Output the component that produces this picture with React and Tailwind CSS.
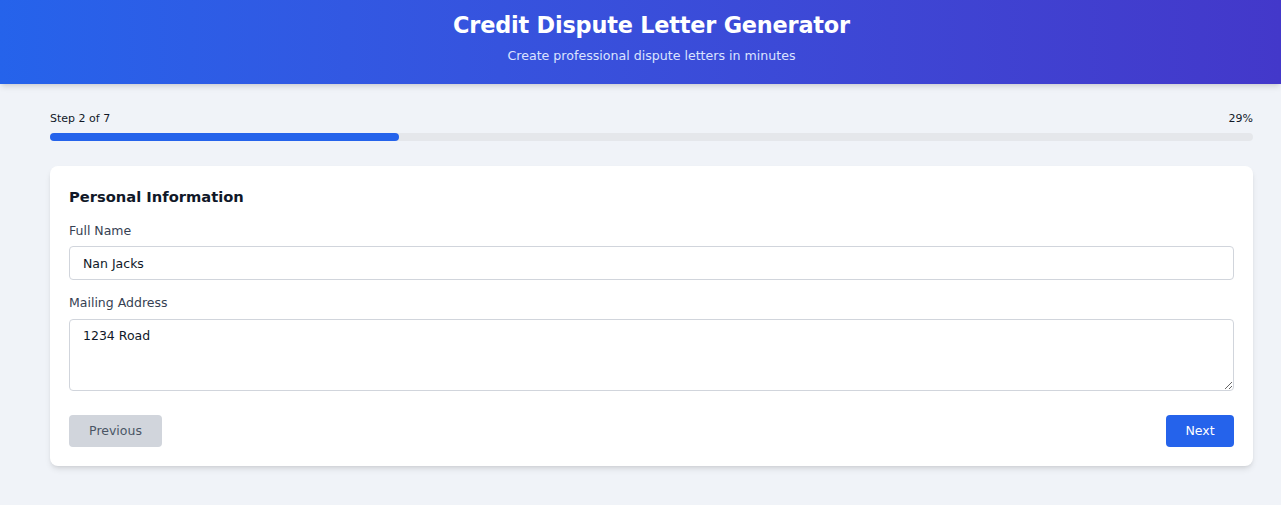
import { useState } from 'react';

const FONT = { fontFamily: '"DejaVu Sans", "Noto Sans", sans-serif' };

export default function App() {
    const [name, setName] = useState('Nan Jacks');
    const [address, setAddress] = useState('1234 Road');
    const step = 2;
    const total = 7;
    const pct = Math.round((step / total) * 100);

    return (
        <div className="min-h-[505px] bg-[#f0f3f8]" style={FONT}>
            {/* Header */}
            <header className="h-[84px] bg-gradient-to-r from-[#2563eb] to-[#4338ca] shadow-md flex flex-col items-center pl-[22px]">
                <h1 className="mt-[9px] text-[22.4px] leading-[32px] font-bold text-white tracking-[-0.2px]">
                    Credit Dispute Letter Generator
                </h1>
                <p className="mt-[6px] text-[12.6px] text-[#dbe3ff]">Create professional dispute letters in minutes</p>
            </header>

            <main className="pl-[50px] pr-[28px]">
                {/* Progress */}
                <div className="pt-[28px]">
                    <div className="flex justify-between text-[11px] text-gray-900 leading-[14px]">
                        <span>Step {step} of {total}</span>
                        <span>{pct}%</span>
                    </div>
                    <div className="mt-[7px] h-[8px] rounded-full bg-gray-200">
                        <div className="h-full rounded-full bg-[#2563eb]" style={{ width: `${pct}%` }} />
                    </div>
                </div>

                {/* Card */}
                <div className="mt-[25px] bg-white rounded-lg shadow-md px-[19px] pt-[20px] pb-[19px]">
                    <h2 className="text-[14.7px] font-semibold text-gray-900 leading-[22px]">Personal Information</h2>

                    <label className="block mt-[14px] text-[12.5px] text-gray-700 leading-[18px]">Full Name</label>
                    <input
                        value={name}
                        onChange={(e) => setName(e.target.value)}
                        className="mt-[6px] block w-full h-[34px] px-[13px] border border-gray-300 rounded text-[12.5px] text-gray-900 outline-none"
                        style={FONT}
                    />

                    <label className="block mt-[14px] text-[12.5px] text-gray-700 leading-[18px]">Mailing Address</label>
                    <textarea
                        value={address}
                        onChange={(e) => setAddress(e.target.value)}
                        className="mt-[7px] block w-full h-[72px] px-[13px] py-[7px] border border-gray-300 rounded text-[12.5px] text-gray-900 outline-none"
                        style={FONT}
                    />

                    <div className="mt-[24px] flex justify-between">
                        <button className="h-[32px] w-[93px] rounded bg-gray-300 text-gray-600 text-[12.5px]" style={FONT}>
                            Previous
                        </button>
                        <button className="h-[32px] w-[68px] rounded bg-[#2563eb] text-white text-[12.5px]" style={FONT}>
                            Next
                        </button>
                    </div>
                </div>
            </main>
        </div>
    );
}
